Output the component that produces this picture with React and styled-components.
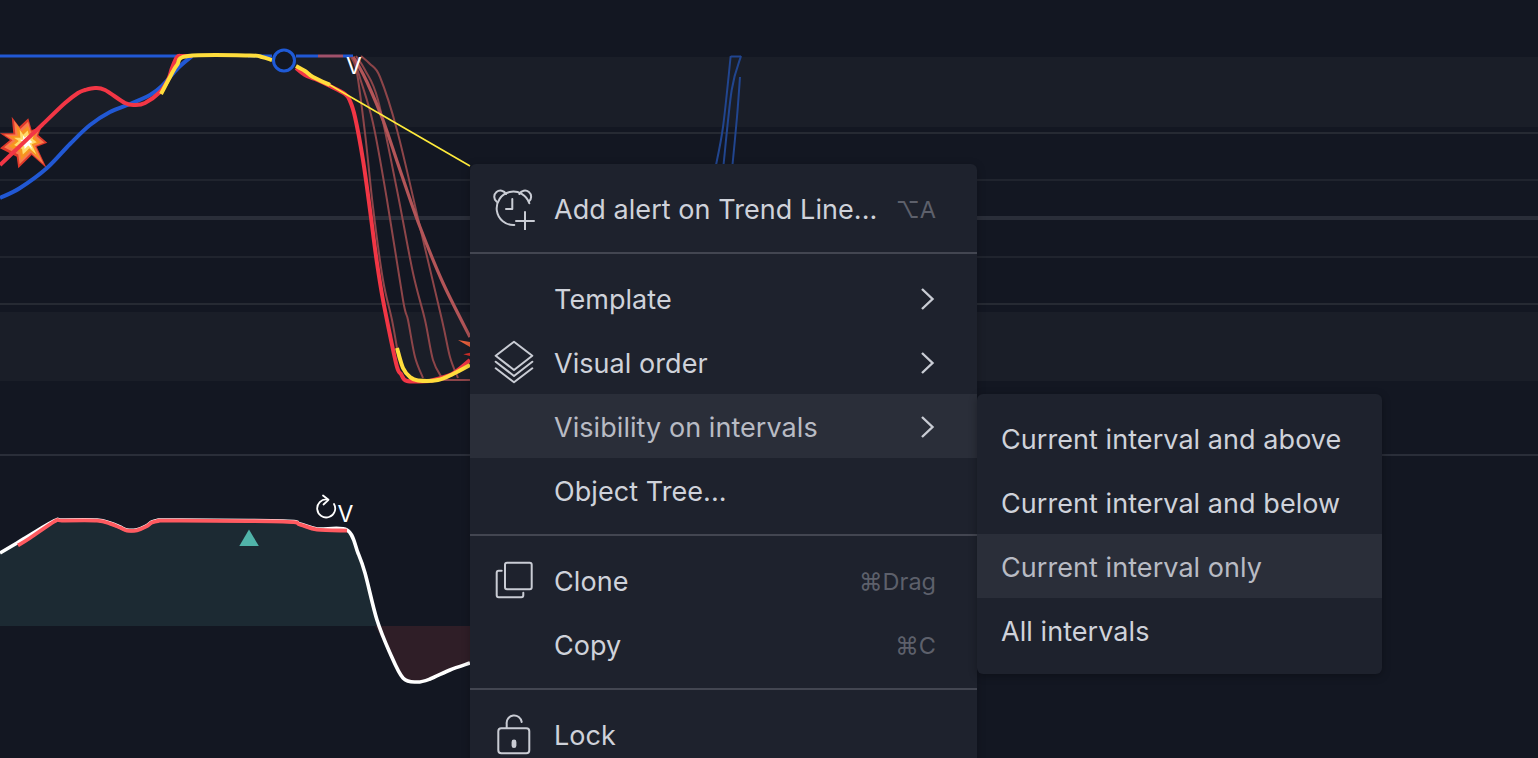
import React from "react";
import styled, { createGlobalStyle } from "styled-components";

const Global = createGlobalStyle`
  html, body { margin: 0; padding: 0; background: #131722; }
  #root { width: 100%; }
`;

const Page = styled.div`
  position: relative;
  width: 1538px;
  height: 758px;
  overflow: hidden;
  background: #131722;
  font-family: Inter, "Noto Sans", sans-serif;
`;

const Chart = styled.svg`
  position: absolute;
  inset: 0;
  display: block;
`;

const ChartLabel = styled.text`
  font-family: Inter, "Liberation Sans", sans-serif;
  font-size: 23px;
  fill: #ffffff;
`;

const Menu = styled.div`
  position: absolute;
  left: 470px;
  top: 164px;
  width: 507px;
  padding: 12px 0;
  background: #1e222d;
  border-radius: 6px 6px 0 0;
  box-shadow: 0 2px 8px rgba(0, 0, 0, 0.25);
`;

const Row = styled.div`
  position: relative;
  display: flex;
  align-items: center;
  height: 64px;
  padding: 0 41px 0 22px;
  background: ${(p) => (p.$active ? "#2a2e39" : "transparent")};
  color: ${(p) => (p.$active ? "#b8bbc4" : "#cfd2da")};
`;

const IconSlot = styled.span`
  display: flex;
  flex: none;
  width: 44px;
  height: 44px;
  margin-right: 18px;
`;

const Icon = styled.svg`
  width: 44px;
  height: 44px;
  fill: none;
  stroke: #c9ccd4;
  stroke-width: 2;
  stroke-linecap: round;
  stroke-linejoin: round;
`;

const Label = styled.span`
  flex: 1;
  padding-top: 3px;
  font-size: 27px;
  letter-spacing: 0.06px;
  line-height: 36px;
  white-space: nowrap;
`;

const Shortcut = styled.span`
  padding-top: 3px;
  font-size: 23.5px;
  line-height: 36px;
  color: #5d606b;
  white-space: nowrap;
  font-family: Inter, "DejaVu Sans", sans-serif;
`;

const Chevron = styled.svg`
  flex: none;
  width: 16px;
  height: 24px;
  margin-top: 2px;
  fill: none;
  stroke: #c9ccd4;
  stroke-width: 2.4;
`;

const Divider = styled.div`
  height: 2px;
  margin: 12px 0;
  background: #434651;
`;

const SubMenu = styled.div`
  position: absolute;
  left: 100%;
  top: 0;
  width: 405px;
  padding: 12px 0;
  background: #1e222d;
  border-radius: 6px;
  box-shadow: 0 2px 8px rgba(0, 0, 0, 0.3);
`;

const SubRow = styled.div`
  display: flex;
  align-items: center;
  height: 64px;
  padding: 3px 24px 0;
  box-sizing: border-box;
  font-size: 27px;
  letter-spacing: 0.06px;
  white-space: nowrap;
  background: ${(p) => (p.$active ? "#2a2e39" : "transparent")};
  color: ${(p) => (p.$active ? "#b8bbc4" : "#cfd2da")};
`;

function smooth(pts) {
  let d = `M${pts[0][0]} ${pts[0][1]}`;
  for (let i = 0; i < pts.length - 1; i++) {
    const p0 = pts[i - 1] || pts[i];
    const p1 = pts[i];
    const p2 = pts[i + 1];
    const p3 = pts[i + 2] || p2;
    const c1 = [p1[0] + (p2[0] - p0[0]) / 6, p1[1] + (p2[1] - p0[1]) / 6];
    const c2 = [p2[0] - (p3[0] - p1[0]) / 6, p2[1] - (p3[1] - p1[1]) / 6];
    d += ` C${c1[0].toFixed(1)} ${c1[1].toFixed(1)} ${c2[0].toFixed(1)} ${c2[1].toFixed(1)} ${p2[0]} ${p2[1]}`;
  }
  return d;
}

const BLUE = "#2158d4";
const RED = "#f23645";
const YELLOW = "#ffdd3c";
const GHOST = "#8d4549";

const blueCurve = [[0,198],[20,188],[47,168],[70,144],[90,125],[110,112],[130,104],[150,95],[162,86],[178,68],[192,56]];
const redCurve = [[0,165],[20,146],[42,125],[65,103],[78,93],[85,90],[95,88],[105,90],[125,103],[135,105],[145,103],[160,92],[168,80],[172,68],[177,57],[182,56],[192,56]];
const yellow1 = [[161,94],[170,77],[177,65],[188,56],[250,55.5],[262,57],[272,60]];
const yellow2 = [[296,66],[305,71],[313,77],[330,85]];
const red2 = [[296,68],[305,75],[315,79],[330,86],[345,94],[350,101],[355,117],[363,160],[370,210],[377,263],[383,300],[390,335],[397,367],[401,374],[407,381],[430,381]];
const redTail = [[430,381],[452,374],[470,360]];
const yellow3 = [[397,348],[403,368],[410,377],[418,380.5],[438,380],[453,374],[470,365]];
const ghostThick = [[353,57],[357,63],[367,82],[383,120],[400,170],[420,227],[443,283],[470,337]];
const ghosts = [
  [[351,57],[357,73],[365,133],[373,207],[383,280],[392,320],[399,360]],
  [[353,57],[360,78],[373,123],[387,200],[403,300],[408,320],[415,357],[423,378]],
  [[356,56],[365,70],[378,100],[397,190],[413,273],[425,320],[433,360],[442,378]],
  [[361,56],[370,64],[380,77],[397,130],[420,227],[442,320],[450,357],[458,378]],
];
const blueGhosts = [
  [[715,170],[723,127],[730.7,56]],
  [[723,170],[731.7,90],[741,56]],
  [[732,170],[737,117],[740,77]],
];
const oscMid = [[55,520.5],[62,520],[97,520],[110,523],[120,527],[127,530],[137,529.7],[146,526],[152,522],[158,520.5],[170,520],[283,521],[300,524],[317,529],[347,530]];
const osc = [[0,553],[17,543],[30,535],...oscMid,[358,553],[365,573],[377,620],[390,653],[403,678],[417,682],[430,679],[450,670],[470,663]];
const oscRed = [[18,545.5],[30,538],...oscMid.map(([x, y]) => [x, y + 0.6])];
const tealTop = osc.slice(0, oscMid.length + 6);
const redFill = osc.slice(oscMid.length + 6);

const star = "11.7,116.7 19.3,126.7 28.3,118.3 31.7,130 41.7,126.7 38.3,135 47.3,142.7 36.7,146.7 46.7,168.3 31.7,155 26.7,160 18.3,168.3 16.7,156.7 0,148.3 10,140 0,133.3 13.3,133.3";

function Boom() {
  const layer = (scale) => `translate(27 142) scale(${scale}) translate(-27 -142)`;
  return (
    <g>
      <polygon points={star} fill="#e0392b" />
      <polygon points={star} fill="#f97c4d" transform={layer(0.85)} />
      <polygon points={star} fill="#f7941f" transform={layer(0.68)} />
      <polygon points={star} fill="#ffdc6b" transform={layer(0.48)} />
      <polygon points={star} fill="#ffffff" transform={layer(0.27)} />
    </g>
  );
}

function ChartDrawing() {
  const lines = [[133, 2, "#262a33"], [180, 2, "#20242e"], [218, 4, "#2a2e39"], [257, 2, "#20242e"], [304, 2, "#262a33"], [455, 2, "#2a2e39"]];
  return (
    <Chart width="1538" height="758" viewBox="0 0 1538 758" fill="none">
      <rect x="0" y="57" width="1538" height="70" fill="#1a1e28" />
      <rect x="0" y="312" width="1538" height="69" fill="#1a1e28" />
      {lines.map(([y, h, c]) => (
        <rect key={y} x="0" y={y - h / 2} width="1538" height={h} fill={c} />
      ))}

      {blueGhosts.map((g, i) => (
        <path key={i} d={smooth(g)} stroke="#21458f" strokeWidth="2" />
      ))}
      <path d="M730.7 56.5H741" stroke="#21458f" strokeWidth="2" />

      <Boom />
      <polygon points="458,340 470,342 470,347" fill="#e8603c" />
      <polygon points="463.3,354.3 470,352.7 470,356" fill="#d8302a" />

      <path d="M0 56H192" stroke={BLUE} strokeWidth="3" />
      <path d={smooth(blueCurve)} stroke={BLUE} strokeWidth="4" />
      <path d={smooth(redCurve)} stroke={RED} strokeWidth="4" strokeLinejoin="round" />
      <path d="M248 56H272" stroke={BLUE} strokeWidth="3" />
      <path d="M296 56H318M343 56H353" stroke={BLUE} strokeWidth="3" />
      <path d="M318 56H343" stroke="#a0516b" strokeWidth="3" />

      {ghosts.map((g, i) => (
        <path key={i} d={smooth(g)} stroke={GHOST} strokeWidth="2" />
      ))}
      <path d="M430 380H470" stroke={GHOST} strokeWidth="2" />
      <path d={smooth(ghostThick)} stroke="#b35558" strokeWidth="3.2" />

      <path d={smooth(red2)} stroke={RED} strokeWidth="4" strokeLinejoin="round" />
      <path d={smooth(redTail)} stroke={RED} strokeWidth="4" />
      <path d="M330 85L470 166" stroke="#ffeb3b" strokeWidth="1.6" />
      <path d={smooth(yellow1)} stroke={YELLOW} strokeWidth="4" />
      <path d={smooth(yellow2)} stroke={YELLOW} strokeWidth="4" />
      <path d={smooth(yellow3)} stroke={YELLOW} strokeWidth="4" />

      <circle cx="284" cy="60.5" r="10.5" fill="#131722" stroke="#1f5ad6" strokeWidth="3" />
      <ChartLabel x="346" y="74">V</ChartLabel>

      <path d={`${smooth(tealTop)} L377 626 L0 626 Z`} fill="#1c2a33" />
      <path d={`${smooth(redFill)} L470 626 L375 626 Z`} fill="#2f1e27" />
      <path d={smooth(osc)} stroke="#ffffff" strokeWidth="3.6" />
      <path d={smooth(oscRed)} stroke="#ff5a60" strokeWidth="3.8" />
      <polygon points="249,529.5 258.8,546 239.3,546" fill="#50b3a9" />

      <path d="M334 504A9 9 0 1 1 327 499.5" stroke="#fff" strokeWidth="1.8" strokeLinecap="round" />
      <path d="M323 495.5L328.5 499.8L323.5 504.5" stroke="#fff" strokeWidth="1.8" strokeLinecap="round" strokeLinejoin="round" />
      <ChartLabel x="337.5" y="522">V</ChartLabel>
    </Chart>
  );
}

const AlarmIcon = () => (
  <Icon viewBox="0 0 44 44">
    <path d="M37.3 17.3A16.7 16.7 0 1 0 22.3 39" />
    <path d="M4.7 15.7A6.2 6.2 0 1 1 14 8M36.7 15.7A6.2 6.2 0 1 0 27.4 8" />
    <path d="M20.3 13V23H14" />
    <path d="M24 35H42M33 26V44" />
  </Icon>
);

const LayersIcon = () => (
  <Icon viewBox="0 0 44 44">
    <path d="M22 1.7L40.3 15.7L22 30L3.7 15.7Z" />
    <path d="M3.7 21.7L22 36L40.3 21.7" />
    <path d="M3.7 28.3L22 42.3L40.3 28.3" />
  </Icon>
);

const CloneIcon = () => (
  <Icon viewBox="0 0 44 44">
    <rect x="13" y="4.7" width="26.7" height="26.6" rx="2" />
    <path d="M9.7 12.7H6.7A2 2 0 0 0 4.7 14.7V37.3A2 2 0 0 0 6.7 39.3H29.3A2 2 0 0 0 31.3 37.3V34.7" />
  </Icon>
);

const LockIcon = () => (
  <Icon viewBox="0 0 44 44">
    <rect x="6.3" y="16.3" width="31" height="25" rx="3" />
    <path d="M14.7 16V12A7.5 7.5 0 0 1 29.7 10" />
    <rect x="20.6" y="28.5" width="2.8" height="6.6" rx="1.4" fill="#c9ccd4" />
  </Icon>
);

const Arrow = () => (
  <Chevron viewBox="0 0 16 24">
    <path d="M2 2L12.5 12L2 22" />
  </Chevron>
);

const submenu = [
  "Current interval and above",
  "Current interval and below",
  "Current interval only",
  "All intervals",
];

export default function App() {
  return (
    <Page>
      <Global />
      <ChartDrawing />
      <Menu>
        <Row>
          <IconSlot><AlarmIcon /></IconSlot>
          <Label>Add alert on Trend Line...</Label>
          <Shortcut>⌥A</Shortcut>
        </Row>
        <Divider />
        <Row>
          <IconSlot />
          <Label>Template</Label>
          <Arrow />
        </Row>
        <Row>
          <IconSlot><LayersIcon /></IconSlot>
          <Label>Visual order</Label>
          <Arrow />
        </Row>
        <Row $active>
          <IconSlot />
          <Label>Visibility on intervals</Label>
          <Arrow />
          <SubMenu>
            {submenu.map((t) => (
              <SubRow key={t} $active={t === "Current interval only"}>{t}</SubRow>
            ))}
          </SubMenu>
        </Row>
        <Row>
          <IconSlot />
          <Label>Object Tree...</Label>
        </Row>
        <Divider />
        <Row>
          <IconSlot><CloneIcon /></IconSlot>
          <Label>Clone</Label>
          <Shortcut>⌘Drag</Shortcut>
        </Row>
        <Row>
          <IconSlot />
          <Label>Copy</Label>
          <Shortcut>⌘C</Shortcut>
        </Row>
        <Divider />
        <Row>
          <IconSlot><LockIcon /></IconSlot>
          <Label>Lock</Label>
        </Row>
      </Menu>
    </Page>
  );
}
